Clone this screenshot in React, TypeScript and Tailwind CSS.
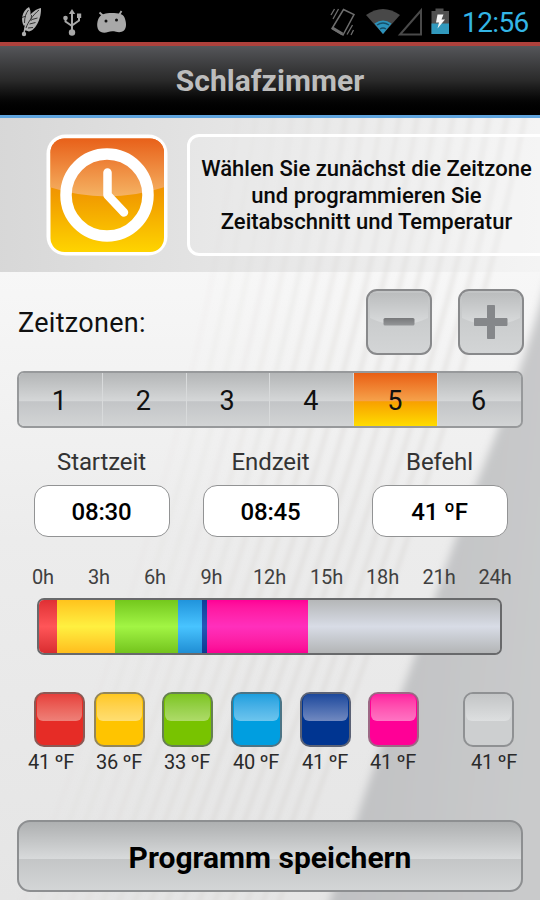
import React from "react";

const zones = ["1", "2", "3", "4", "5", "6"];

const fields = [
  { label: "Startzeit", value: "08:30" },
  { label: "Endzeit", value: "08:45" },
  { label: "Befehl", value: "41 ºF" },
];

const hours = [
  { label: "0h", cls: "w-[56px]" },
  { label: "3h", cls: "w-[56px]" },
  { label: "6h", cls: "w-[56px]" },
  { label: "9h", cls: "w-[57px]" },
  { label: "12h", cls: "w-[59px]" },
  { label: "15h", cls: "w-[55px]" },
  { label: "18h", cls: "w-[57px]" },
  { label: "21h", cls: "w-[56px]" },
  { label: "24h", cls: "w-[56px]" },
];

const segments = [
  "w-[18px] from-[#e02f34] via-[#ff5558] to-[#d92c30]",
  "w-[58px] from-[#ffc31c] via-[#fff040] to-[#ffbd1c]",
  "w-[63px] from-[#74c81c] via-[#a2f544] to-[#74c41c]",
  "w-[24px] from-[#2094dc] via-[#48c4ff] to-[#1f8ed4]",
  "w-[5px] from-[#0d3f98] via-[#2458b8] to-[#0c3b90]",
  "w-[101px] from-[#ff0096] via-[#ff2fbc] to-[#fb0092]",
  "flex-1 from-[#b5b7b8] via-[#d8dce6] to-[#b3b5b6]",
];

const swatches = [
  { bg: "bg-[#e62c26]", gloss: "from-[#e63e3b] to-[#ee8078]", cell: "ml-[17px] w-[68px]", box: "ml-[17px]", border: "border-[#8b5a55]", temp: "41 ºF" },
  { bg: "bg-[#ffc400]", gloss: "from-[#ffc81d] to-[#ffde70]", cell: "w-[68px]", box: "ml-[9px]", border: "border-[#93865a]", temp: "36 ºF" },
  { bg: "bg-[#78c300]", gloss: "from-[#7dc51a] to-[#aedb68]", cell: "w-[69px]", box: "ml-[9px]", border: "border-[#668052]", temp: "33 ºF" },
  { bg: "bg-[#009ee0]", gloss: "from-[#199fdf] to-[#6cc5ee]", cell: "w-[69px]", box: "ml-[9px]", border: "border-[#4c7485]", temp: "40 ºF" },
  { bg: "bg-[#003591]", gloss: "from-[#1c489c] to-[#7189c0]", cell: "w-[68px]", box: "ml-[9px]", border: "border-[#5b6275]", temp: "41 ºF" },
  { bg: "bg-[#ff0096]", gloss: "from-[#ff1ca0] to-[#ff73c3]", cell: "w-[68px]", box: "ml-[9px]", border: "border-[#9c6884]", temp: "41 ºF" },
  { bg: "bg-[#cdcfd0]", gloss: "from-[#c3c5c6] to-[#dddfe0]", cell: "ml-[33px] w-[68px]", box: "ml-[3px]", border: "border-[#8f9193]", temp: "41 ºF" },
];

function Backdrop() {
  const lines = Array.from({ length: 17 }, (_, i) => i);
  return (
    <svg className="absolute inset-0" width="540" height="900" viewBox="0 0 540 900">
      <defs>
        <linearGradient id="page" x1="0" y1="0" x2="0" y2="1">
          <stop offset="0.3" stopColor="#f7f7f7" />
          <stop offset="0.6" stopColor="#ececec" />
          <stop offset="1" stopColor="#e5e5e5" />
        </linearGradient>
        <linearGradient id="shade" x1="0" y1="0" x2="1" y2="0.3">
          <stop offset="0.3" stopColor="#c0c1c3" />
          <stop offset="1" stopColor="#c9cacb" />
        </linearGradient>
        <filter id="soft"><feGaussianBlur stdDeviation="4" /></filter>
        <filter id="soft2"><feGaussianBlur stdDeviation="2" /></filter>
      </defs>
      <rect width="540" height="900" fill="url(#page)" />
      <g filter="url(#soft2)">
        {lines.map((i) => (
          <path
            key={i}
            d={`M${240 + i * 18} 100 C${215 + i * 17} 330 ${140 + i * 15.5} 600 ${20 + i * 16} 910`}
            fill="none"
            stroke="#d3d0cc"
            strokeOpacity={0.1 + Math.min(i, 10) * 0.028}
            strokeWidth="4.5"
          />
        ))}
      </g>
      <path
        d="M560 225 C535 340 502 420 470 500 C440 580 425 630 408 675 C385 735 365 790 350 840 C340 870 332 895 322 925 L560 925 Z"
        fill="url(#shade)"
        filter="url(#soft)"
      />
    </svg>
  );
}

function StatusBar() {
  return (
    <div className="flex h-[42px] items-center bg-black">
      <svg width="135" height="42" viewBox="0 0 135 42">
        <g fill="#b0b0b0">
          <path d="M24 26 C20.500 21 21.500 11 29 7 C31.500 11 31 18 27 23 Z" />
          <path d="M24.500 30 C23.500 22 31 10 41 8 C41.500 18 36 30 29 31.500 Z" />
          <circle cx="24" cy="34" r="2.200" />
        </g>
        <path d="M24 35 C24 30 26 25 29 21" stroke="#b0b0b0" strokeWidth="1.500" fill="none" />
        <path d="M26 28C28 22 33 15 39 10 M24.500 23C24.500 17 26 13 28.500 10 M29.500 24l6-1.500 M32 19.500l5.500-1.500 M31 21l.5-6 M22 17.500l4-1.500 M28 28l5-.5" stroke="#333" strokeWidth="1" fill="none" />
        <path d="M72 31V12 M65.500 18v3.500l6.500 4.500 M79 16v4.500l-7 5" fill="none" stroke="#a8a8a8" strokeWidth="2" />
        <g fill="#a8a8a8">
          <circle cx="72" cy="32.500" r="3.200" />
          <path d="M68.800 14L72 9l3.200 5Z" />
          <circle cx="65.500" cy="18" r="2.300" />
          <rect x="77" y="13.500" width="4.200" height="4.500" />
          <path d="M111.500 13c7.500 0 11.500 1 13 4.500c1.800 4.500 2.500 10-.5 13c-2.500 2.200-6 1.800-8 1.200c-3-.6-5.500-.6-8 .3c-3.500 1.200-7.500.8-9.500-2c-2.300-4-1.300-10 1-13c2-3 6-4 12-4Z" />
          <path d="M99.500 12.500l4.500 4 M121.500 11l-3 5" stroke="#a8a8a8" strokeWidth="1.800" />
        </g>
        <circle cx="106" cy="21" r="1.500" fill="#111" />
        <circle cx="116.500" cy="20" r="1.500" fill="#111" />
      </svg>
      <svg className="ml-[190px]" width="130" height="42" viewBox="325 0 130 42">
        <g fill="none" stroke="#6e6e6e" strokeWidth="1.500">
          <path d="M343.500 9.500L354 14.500L343 35L332 28.500Z" />
          <path d="M332.500 28l10 6" strokeWidth="3" />
          <path d="M331 15l3.500-6 M333 19l5.500-10 M352.500 25l-5.500 9.500 M353.500 30l-2.500 5" strokeWidth="1.300" />
        </g>
        <path d="M366 15 Q383 3 400 15 L383 34 Z" fill="#484848" />
        <path d="M374.500 23.500 Q383 17.500 391.500 23.500 L383 34 Z" fill="#2b93bd" />
        <path d="M377 25q6-4 12 0 M380 29q3-2 6 0" stroke="#164f68" strokeWidth="1.500" fill="none" />
        <path d="M400 34.500H421V10.500Z" fill="none" stroke="#4a4a4a" strokeWidth="2" />
        <path d="M431.500 11h4V8.500h8V11h5.500V34h-17.500Z" fill="#505050" />
        <path d="M431.500 23.500H449V34h-17.500Z" fill="#3199bd" />
        <path d="M437.500 14.500h6l-2 5h3.500l-7.500 9l1.500-6h-3Z" fill="#f5f5f5" />
      </svg>
      <span className="ml-[7px] translate-y-[2px] text-[28px] leading-none tracking-[-0.600px] whitespace-nowrap text-[#33b5e5]">12:56</span>
    </div>
  );
}

function StepButton({ kind }: { kind: "minus" | "plus" }) {
  return (
    <button aria-label={kind} className="h-[66px] w-[66px] overflow-hidden rounded-[11px] border-2 border-[#88898b] bg-linear-to-b from-[#c2c4c5] to-[#d3d5d6]">
      <svg width="62" height="62" viewBox="0 0 62 62">
        <defs>
          <linearGradient id="keygloss" x1="0" y1="0" x2="0" y2="1">
            <stop offset="0" stopColor="#bbbdbe" />
            <stop offset="1" stopColor="#dadcdd" />
          </linearGradient>
          <linearGradient id="bar" x1="0" y1="0" x2="0" y2="1">
            <stop offset="0" stopColor="#77787a" />
            <stop offset="1" stopColor="#949698" />
          </linearGradient>
        </defs>
        <path d="M2 2H60V27Q31 41 2 27Z" fill="url(#keygloss)" />
        {kind === "minus" ? (
          <rect x="15.500" y="27" width="31" height="7.500" rx="1.500" fill="url(#bar)" />
        ) : (
          <path d="M27.500 14.500H34.500V27.500H47V34.500H34.500V47.500H27.500V34.500H14.500V27.500H27.500Z" fill="#85878a" stroke="#85878a" strokeLinejoin="round" />
        )}
      </svg>
    </button>
  );
}

function ClockIcon() {
  return (
    <svg className="shrink-0" width="122" height="122" viewBox="0 0 122 122">
      <defs>
        <linearGradient id="sun" x1="0" y1="0" x2="0" y2="1">
          <stop offset="0" stopColor="#ec6a10" />
          <stop offset="0.5" stopColor="#f19a00" />
          <stop offset="1" stopColor="#ffd800" />
        </linearGradient>
        <linearGradient id="sungloss" x1="0" y1="0" x2="0" y2="1">
          <stop offset="0" stopColor="#e75a14" />
          <stop offset="1" stopColor="#f5b363" />
        </linearGradient>
        <clipPath id="tile"><rect x="4.500" y="4.500" width="113.500" height="113.500" rx="14" /></clipPath>
      </defs>
      <rect x="0.500" y="0.500" width="121" height="121" rx="19" fill="#fff" />
      <g clipPath="url(#tile)">
        <rect width="122" height="122" fill="url(#sun)" />
        <path d="M0 0H122V52Q61 73 0 52Z" fill="url(#sungloss)" />
      </g>
      <circle cx="61" cy="61" r="41" fill="none" stroke="#fff" strokeWidth="11.500" />
      <path d="M61.500 38.500V61L78 78.500" fill="none" stroke="#fff" strokeWidth="8.500" strokeLinecap="round" strokeLinejoin="round" />
    </svg>
  );
}

export default function App() {
  return (
    <div className="relative h-[900px] w-[540px] overflow-hidden font-[Roboto,sans-serif] text-[#111]">
      <Backdrop />
      <div className="relative flex h-full flex-col">
        <StatusBar />
        <header className="flex h-[76px] items-center justify-center border-t-4 border-b-3 border-t-[#ae413c] border-b-[#5fa4de] bg-linear-to-b from-[#55565a] via-[#2a2a2a] via-50% to-black">
          <h1 className="text-[30px] leading-none font-bold tracking-[0.050px] whitespace-nowrap text-[#bdbdbd]">Schlafzimmer</h1>
        </header>

        <section className="flex h-[154px] overflow-hidden bg-linear-to-r from-[#b8b8b8]/50 via-[#cfcfcf]/40 to-[#ededed]/30 pt-[16px] pl-[46px]">
          <ClockIcon />
          <div className="ml-[19px] flex h-[122px] w-[370px] shrink-0 items-center rounded-[12px] border-[3px] border-white bg-white/15">
            <p className="w-[353px] pt-[2px] text-center text-[22px] leading-[26.500px] font-medium tracking-[0.020px] whitespace-nowrap text-[#0a0a0a]">
              Wählen Sie zunächst die Zeitzone
              <br />
              und programmieren Sie
              <br />
              Zeitabschnitt und Temperatur
            </p>
          </div>
        </section>

        <section className="flex h-[99px] items-start pt-[17px] pl-[18px]">
          <h2 className="mt-[18px] w-[348px] text-[27px] leading-[32px] tracking-[0.300px] whitespace-nowrap">Zeitzonen:</h2>
          <StepButton kind="minus" />
          <div className="w-[26px]" />
          <StepButton kind="plus" />
        </section>

        <nav className="mx-[17px] flex h-[57px] overflow-hidden rounded-[7px] border-2 border-[#97999b]">
          {zones.map((z) => (
            <button
              key={z}
              className={
                z === "5"
                  ? "flex-1 border-r border-[#d8d8d8] bg-[linear-gradient(#e95f14,#f6a24b_53%,#f8a000_54%,#ffdc00)] pt-[4px] pr-[2px] text-[27px]"
                  : "flex-1 border-r border-[#d8dadb] bg-[linear-gradient(#b4b6b7,#d5d7d8_53%,#c3c5c7_54%,#d2d4d5)] pt-[4px] pr-[2px] text-[27px] last:border-r-0"
              }
            >
              {z}
            </button>
          ))}
        </nav>

        <section className="mt-[18px] flex pl-[17px]">
          {fields.map((f) => (
            <div key={f.label} className="flex w-[169px] flex-col items-center">
              <span className="text-[24px] leading-[32px] tracking-[-0.100px] text-[#333]">{f.label}</span>
              <div className="mt-[7px] flex h-[52px] w-[136px] items-center justify-center rounded-[14px] border-[1.500px] border-[#929394] bg-white pt-[2px] text-[24px] font-medium tracking-[-0.200px] text-black">
                {f.value}
              </div>
            </div>
          ))}
        </section>

        <div className="mt-[28px] flex h-[25px] pl-[15px] text-[20px] leading-[24px] tracking-[-0.150px] text-[#404040]">
          {hours.map((h) => (
            <span key={h.label} className={`${h.cls} shrink-0 text-center`}>{h.label}</span>
          ))}
        </div>

        <div className="mt-[8px] ml-[37px] flex h-[57px] w-[465px] shrink-0 overflow-hidden rounded-[7px] border-2 border-[#68696b]">
          {segments.map((s) => (
            <div key={s} className={`bg-linear-to-b ${s}`} />
          ))}
        </div>

        <div className="mt-[37px] flex h-[86px]">
          {swatches.map((s, i) => (
            <div key={i} className={`${s.cell} shrink-0`}>
              <div className={`${s.box} ${s.bg} ${s.border} h-[55px] w-[51px] rounded-[10px] border-2 px-[1px]`}>
                <div className={`h-[27px] rounded-t-[7px] rounded-b-[6px] bg-linear-to-b ${s.gloss}`} />
              </div>
              <div className="mt-[3px] w-[68px] text-center text-[20px] leading-[24px] tracking-[-0.300px] whitespace-nowrap text-[#2a2a2a]">{s.temp}</div>
            </div>
          ))}
        </div>

        <button className="mx-[17px] mt-[42px] flex h-[72px] shrink-0 items-center justify-center rounded-[13px] border-2 border-[#8d8f91] bg-[linear-gradient(#aeb0b1,#d8dadb_54%,#c4c6c7_55%,#d3d5d6)] pt-[2px] text-[30px] font-bold text-black">
          <span>Programm speichern</span>
        </button>
      </div>
    </div>
  );
}
